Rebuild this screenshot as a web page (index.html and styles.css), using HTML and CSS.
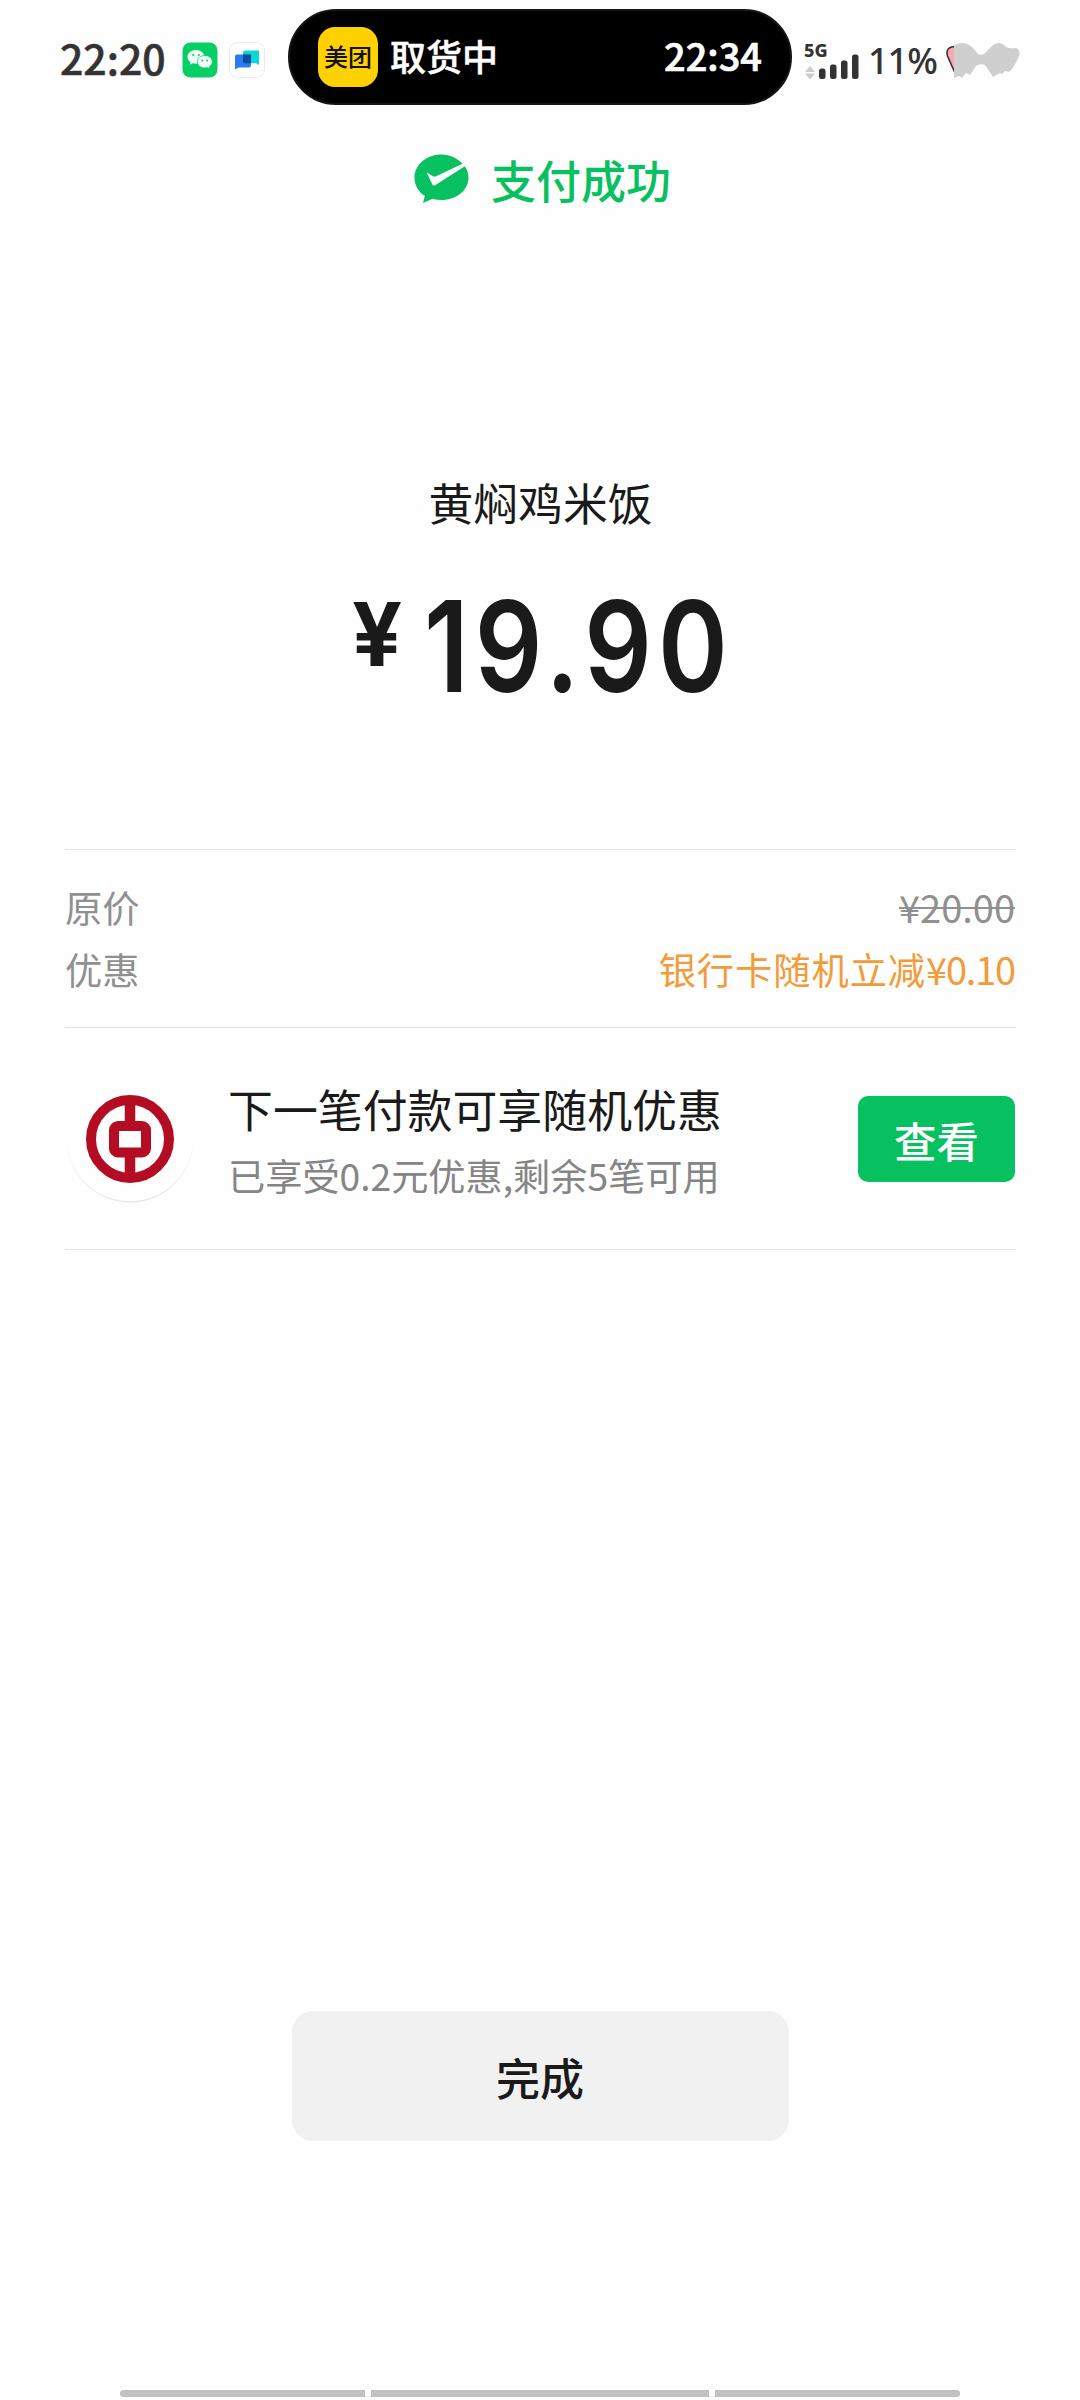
FILE: index.html
```html
<!DOCTYPE html>
<html lang="zh-CN">
<head>
<meta charset="utf-8">
<title>支付成功</title>
<link rel="stylesheet" href="styles.css">
</head>
<body>
<div class="screen">
  <header class="status">
    <div class="status-left">
      <span class="clock">22:20</span>
      <svg class="app" viewBox="0 0 36 36">
        <rect x=".5" y=".5" width="35" height="35" rx="8" fill="#06cf65"/>
        <path d="M14 8c-4.800 0-8.500 3-8.500 6.900 0 2.200 1.200 4 3.100 5.300l-.8 2.600 3-1.600c1 .3 2 .5 3.200.5 4.700 0 8.400-3.100 8.400-6.900S18.700 8 14 8z" fill="#f4fff8"/>
        <path d="M22.800 13.500c-4.200 0-7.500 2.800-7.500 6.200s3.300 6.300 7.500 6.300c.9 0 1.800-.1 2.600-.4l2.500 1.400-.7-2.200c1.900-1.200 3.100-3 3.100-5.100 0-3.400-3.300-6.200-7.500-6.200z" fill="#f4fff8" stroke="#06cf65" stroke-width=".8"/>
        <g fill="#06cf65"><circle cx="11.300" cy="13" r="1.100"/><circle cx="16.800" cy="13" r="1.100"/><circle cx="20.300" cy="18.400" r="1"/><circle cx="25.200" cy="18.400" r="1"/></g>
      </svg>
      <svg class="app" viewBox="0 0 36 36">
        <rect x=".5" y=".5" width="35" height="35" rx="8" fill="#fff" stroke="#e9e9ef"/>
        <path d="M14 10.500q0-2 2-2h14v14.500l-3-1.700H16q-2 0-2-2z" fill="#0bd8d6"/>
        <path d="M6 14.500q0-2 2-2h14v11q0 2-2 2H9.500L6 27.500z" fill="#2b7cf0"/>
        <path d="M14 12.500h8v8.800h-6q-2 0-2-2z" fill="#0c4c9c"/>
      </svg>
    </div>
    <div class="island">
      <span class="meituan">美团</span>
      <span class="island-label">取货中</span>
      <span class="island-time">22:34</span>
    </div>
    <div class="status-right">
      <div class="network">
        <span class="gen">5G</span>
        <svg class="signal" viewBox="0 0 54 25">
          <path d="M0 18l5-6 5 6zM0 19.500h10l-5 6z" fill="#ccc"/>
          <g fill="#333"><rect x="14" y="14.500" width="6.500" height="10.500" rx="2.500"/><rect x="25" y="10.500" width="6.500" height="14.500" rx="2.500"/><rect x="36" y="6.500" width="6.500" height="18.500" rx="2.500"/><rect x="47" y=".5" width="6.500" height="24.500" rx="2.500"/></g>
        </svg>
      </div>
      <span class="battery">11%</span>
      <svg class="sticker" viewBox="0 0 74 36">
        <path d="M9 31L1.500 14Q-1 5 9 4.500z" fill="#f9a9ae" stroke="#333" stroke-width="1.600"/>
        <path d="M8 3Q19-2 27 6l5 6q3 1 6 0l5-5Q52-4 60 5q4 2 10 1 5 2 3 8-5 12-10 16l-4-1-3 3-2-1-7 4-8-12q-5-2-9 1l-6 9-4-2-4 5-3-2-5 2z" fill="#cfcfcf"/>
      </svg>
    </div>
  </header>

  <div class="result">
    <svg class="check" viewBox="0 0 55 50">
      <path d="M27.500.5C12.500.5.5 10.800.5 23.700c0 7.500 4 14 10.300 18.300L9 49l9.500-4.200c2.900.8 5.900 1.200 9 1.200 15 0 27-10 27-22.300 0-4.300-1.300-8.200-3.700-11.500L21.500 31c-1.600.9-2.600.7-3.300-.9L12.500 18.200l6.500 4c1 .6 2 .6 3.100.1L48.500 9.800C43.500 4.200 36 .5 27.500.5z" fill="#07c160"/>
    </svg>
    <span class="result-text">支付成功</span>
  </div>

  <main class="content">
    <div class="merchant">黄焖鸡米饭</div>
    <div class="amount"><span class="yen">¥</span><span class="value">19.90</span></div>

    <section class="details">
      <div class="row"><span>原价</span><span class="original">¥20.00</span></div>
      <div class="row"><span>优惠</span><span class="discount">银行卡随机立减<span class="num">¥0.10</span></span></div>
    </section>

    <section class="promo">
      <svg class="bank" viewBox="0 0 130 130">
        <circle cx="65" cy="65.500" r="63" fill="#e6e6e6"/>
        <circle cx="65" cy="64" r="63.300" fill="#fefefe"/>
        <g fill="none" stroke="#b40c22">
          <circle cx="65" cy="65" r="39" stroke-width="10"/>
          <rect x="49" y="52" width="32" height="26.500" rx="4" stroke-width="10"/>
          <path d="M65 25v23M65 82v22" stroke-width="10.500"/>
        </g>
      </svg>
      <div class="promo-text">
        <div class="promo-title">下一笔付款可享随机优惠</div>
        <div class="promo-sub">已享受0.2元优惠,剩余5笔可用</div>
      </div>
      <button class="view">查看</button>
    </section>
  </main>

  <footer class="footer">
    <button class="done">完成</button>
    <div class="nav"><i class="nav-side"></i><i class="nav-home"></i><i class="nav-side nav-end"></i></div>
  </footer>
</div>
</body>
</html>
```
FILE: styles.css
```css
* { box-sizing: border-box; }
body {
  margin: 0;
  background: #fefefe;
  color: #1a1a1a;
  font-family: "Noto Sans CJK SC", sans-serif;
}
button { border: 0; padding: 0; font-family: inherit; }
svg { display: block; flex: none; }
.screen {
  width: 1080px;
  height: 2400px;
  display: flex;
  flex-direction: column;
  overflow: hidden;
}

/* Status bar */
.status {
  height: 114px;
  display: grid;
  grid-template-columns: 288px 504px 288px;
  align-items: center;
  color: #333;
  white-space: nowrap;
}
.status-left { display: flex; align-items: center; padding: 5px 0 0 60px; }
.clock { font-size: 41px; font-weight: 500; line-height: 54px; width: 122px; margin-top: -5px; -webkit-text-stroke: .5px #333; }
.app { width: 36px; height: 36px; margin-right: 11px; }
.island {
  height: 96px;
  border-radius: 48px;
  background: #000;
  border: 2px solid #151515;
  color: #fff;
  display: flex;
  align-items: center;
  padding: 0 28px 0 28px;
}
.meituan {
  width: 60px;
  height: 60px;
  border-radius: 17px;
  background: #ffd100;
  color: #111;
  font-size: 24px;
  font-weight: 500;
  line-height: 58px;
  text-align: center;
  margin-right: 12px;
}
.island-label { font-size: 36px; font-weight: 500; line-height: 50px; margin-top: -5px; -webkit-text-stroke: .5px #fff; }
.island-time { font-size: 38px; font-weight: 500; line-height: 50px; margin: -4px 0 0 auto; -webkit-text-stroke: .7px #fff; }
.status-right { display: flex; align-items: center; padding: 7px 0 0 13px; }
.network { width: 63px; }
.gen { display: block; font: 800 18px/14px "Noto Sans", sans-serif; margin-left: -1px; }
.signal { width: 54px; height: 25px; margin-top: -3px; }
.battery { font: 500 36px/50px "Noto Sans", sans-serif; letter-spacing: -1px; width: 78px; }
.sticker { width: 74px; height: 36px; margin-top: -2px; }

/* Result heading */
.result {
  height: 132px;
  display: flex;
  justify-content: center;
  align-items: center;
  padding-left: 5px;
}
.check { width: 55px; height: 50px; margin-right: 22px; margin-top: -2px; }
.result-text { font-size: 45px; font-weight: 500; line-height: 60px; color: #07c160; }

.content { padding: 0 64px 0 65px; }
.merchant { margin-top: 226px; height: 60px; font-size: 44.800px; line-height: 60px; text-align: center; }
.amount {
  display: flex;
  height: 317px;
  padding: 54px 0 0 287px;
  font-family: Inter, sans-serif;
}
.yen { width: 72px; font-size: 88px; font-weight: 700; line-height: 96px; }
.value {
  font-size: 126px;
  font-weight: 600;
  line-height: 120px;
  letter-spacing: 7.200px;
  transform: scaleX(.84);
  transform-origin: left;
}

/* Price breakdown */
.details {
  height: 178px;
  border-top: 1px solid #e2e2e2;
  padding-top: 26px;
  color: #909090;
  font-size: 37.300px;
}
.row { display: flex; justify-content: space-between; height: 62px; line-height: 62px; }
.original {
  margin-right: 1px;
  font-size: 38px;
  line-height: 61px;
  text-decoration: line-through;
  text-decoration-thickness: 2px;
}
.discount { color: #f39b3b; letter-spacing: .900px; }
.num { font-size: 38px; letter-spacing: -1.200px; margin-right: 1px; }

/* Offer card */
.promo {
  height: 223px;
  border-top: 1px solid #e2e2e2;
  border-bottom: 1px solid #e2e2e2;
  display: flex;
  align-items: center;
}
.bank { width: 130px; height: 130px; }
.promo-text { margin-left: 33px; flex: 1; padding-top: 6px; }
.promo-title { font-size: 44.900px; line-height: 66px; }
.promo-sub { font-size: 37.200px; line-height: 66px; color: #858585; }
.view {
  width: 157px;
  height: 86px;
  margin-right: 1px;
  border-radius: 10px;
  background: #07c160;
  color: #fff;
  font-size: 42.500px;
  font-weight: 500;
  line-height: 87px;
}

/* Bottom area */
.footer { margin-top: auto; display: flex; flex-direction: column; align-items: center; }
.done {
  width: 497px;
  height: 130px;
  border-radius: 21px;
  background: #f1f1f1;
  color: #1a1a1a;
  font-size: 44px;
  font-weight: 500;
  line-height: 132px;
  margin-bottom: 249px;
}
.nav { display: flex; gap: 6px; padding-bottom: 3px; }
.nav-side, .nav-home { height: 7px; background: #c1c1c1; }
.nav-side { width: 245px; border-radius: 4px 0 0 4px; }
.nav-home { width: 338px; }
.nav-end { border-radius: 0 4px 4px 0; }
```
